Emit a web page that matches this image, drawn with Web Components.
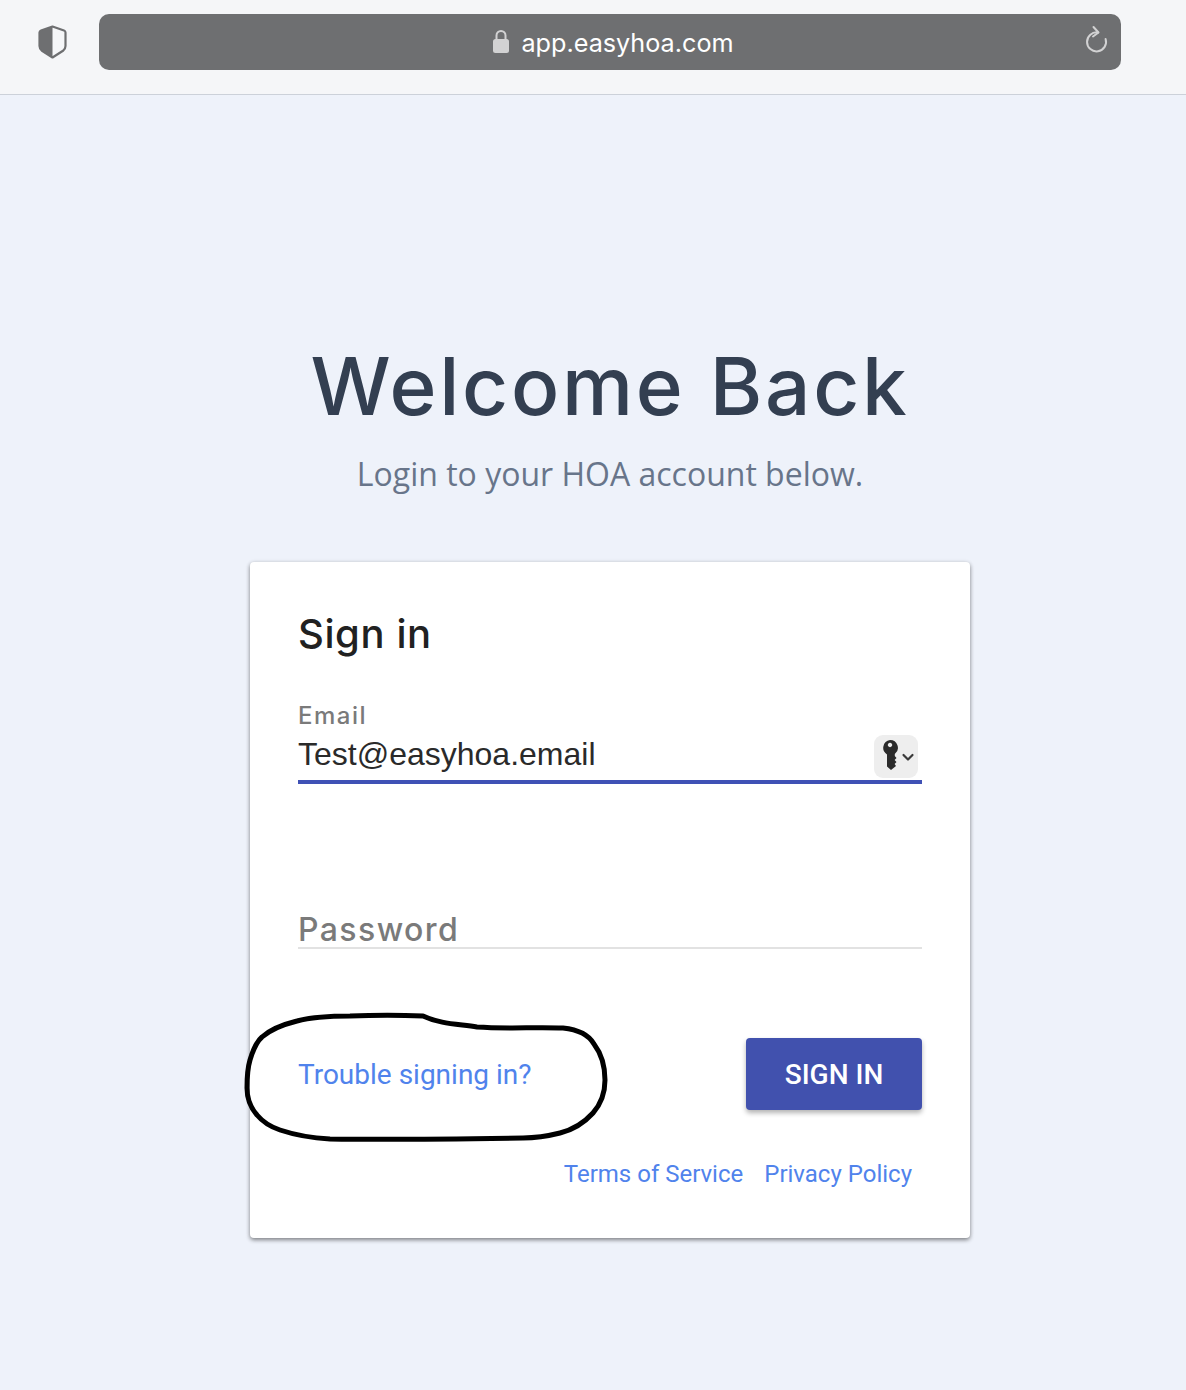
<!DOCTYPE html>
<html lang="en">
<head>
<meta charset="utf-8">
<title>EasyHOA</title>
<style>
	html, body {
		margin: 0;
		height: 1390px;
		overflow: hidden;
		background: #eef2fa;
	}
</style>
</head>
<body>
<browser-bar url="app.easyhoa.com"></browser-bar>
<login-page></login-page>

<script>
class BrowserBar extends HTMLElement {
	constructor() {
		super();
		this.attachShadow({ mode: 'open' });
		this.shadowRoot.innerHTML = `
			<style>
				:host {
					display: flex;
					align-items: center;
					box-sizing: border-box;
					height: 95px;
					padding: 0 65px 11px 38px;
					background: #f5f6f8;
					border-bottom: 1px solid #ccd1d9;
				}
				.shield { width: 29px; height: 34px; margin-right: 32px; flex: none; }
				.field {
					flex: 1;
					display: flex;
					align-items: center;
					justify-content: center;
					position: relative;
					height: 56px;
					border-radius: 10px;
					background: #6e6f71;
					color: #fff;
					font: 400 25.200px Inter, "Liberation Sans", sans-serif;
				}
				.field span { margin-top: 2px; }
				.lock { width: 18px; height: 25px; margin-right: 11px; margin-left: 6px; }
				.reload { position: absolute; right: 12px; top: 11px; width: 26px; height: 30px; }
			</style>
			<svg class="shield" viewBox="0 0 29 34" aria-hidden="true">
				<path d="M14.500 1.500 L26 5.500 Q27.500 6 27.500 7.500 V21 Q27.500 24 25 25.800 L14.500 32.500 L4 25.800 Q1.500 24 1.500 21 V7.500 Q1.500 6 3 5.500 Z" fill="none" stroke="#6e6f71" stroke-width="2.200" stroke-linejoin="round"/>
				<path d="M14.500 1.500 V32.500 L4 25.800 Q1.500 24 1.500 21 V7.500 Q1.500 6 3 5.500 Z" fill="#6e6f71"/>
			</svg>
			<div class="field">
				<svg class="lock" viewBox="0 0 18 25" aria-hidden="true">
					<path d="M4.500 11 V6.500 a4.500 4.500 0 0 1 9 0 V11" fill="none" stroke="#d2d2d3" stroke-width="2"/>
					<rect x="1" y="10" width="16" height="14" rx="2.500" fill="#d2d2d3"/>
				</svg>
				<span></span>
				<svg class="reload" viewBox="0 0 26 30" aria-hidden="true">
					<path d="M15 7.500 A9.500 9.500 0 1 0 22.600 14" fill="none" stroke="#d2d2d3" stroke-width="2" stroke-linecap="round"/>
					<path d="M10.500 2 L15.500 7.500 L10 11.500" fill="none" stroke="#d2d2d3" stroke-width="2" stroke-linecap="round" stroke-linejoin="round"/>
				</svg>
			</div>
		`;
	}

	connectedCallback() {
		this.shadowRoot.querySelector('span').textContent = this.getAttribute('url');
	}
}

class TextField extends HTMLElement {
	constructor() {
		super();
		this.attachShadow({ mode: 'open' });
		this.shadowRoot.innerHTML = `
			<style>
				:host {
					display: block;
					position: relative;
					box-sizing: border-box;
					height: 88px;
					border-bottom: 2px solid #e2e2e2;
				}
				:host([active]) { height: 84px; border-bottom: 4px solid #3f51b5; }
				label {
					display: block;
					color: #7a7a7a;
					font: 500 24px/32px "Inter", "Liberation Sans", sans-serif;
					letter-spacing: 1.500px;
				}
				:host(:not([active])) label {
					padding-top: 52px;
					font-size: 32px;
					line-height: 34px;
					letter-spacing: 1.400px;
				}
				.value {
					color: #2a2a2a;
					font: 400 32px/44px "Liberation Sans", sans-serif;
				}
				::slotted(*) { position: absolute; right: 4px; top: 35px; }
			</style>
			<label></label>
			<div class="value"></div>
			<slot></slot>
		`;
	}

	connectedCallback() {
		this.shadowRoot.querySelector('label').textContent = this.getAttribute('label');
		this.shadowRoot.querySelector('.value').textContent = this.getAttribute('value') || '';
	}
}

class KeyButton extends HTMLElement {
	constructor() {
		super();
		this.attachShadow({ mode: 'open' });
		this.shadowRoot.innerHTML = `
			<style>
				:host {
					display: block;
					width: 44px;
					height: 43px;
					border-radius: 9px;
					background: #eeeeee;
				}
				svg { display: block; }
			</style>
			<svg width="44" height="43" viewBox="0 0 44 43" aria-hidden="true">
				<path fill-rule="evenodd" fill="#2b2b2b" d="M16 5 a7.800 7.800 0 0 1 4.800 14 V21 L22.500 23 L20.600 25 L22.500 27 L20.600 29 L22 31 L17 35 L13 31.500 V19.400 A7.800 7.800 0 0 1 16 5 Z M16 7.800 a2.200 2.200 0 1 0 0.010 0 Z"/>
				<path d="M29.500 20 L34 24.500 L38.500 20" fill="none" stroke="#3a3a3a" stroke-width="2.200" stroke-linecap="round" stroke-linejoin="round"/>
			</svg>
		`;
	}
}

class SignInCard extends HTMLElement {
	constructor() {
		super();
		this.attachShadow({ mode: 'open' });
		this.shadowRoot.innerHTML = `
			<style>
				:host {
					display: block;
					box-sizing: border-box;
					width: 720px;
					height: 676px;
					padding: 40px 48px 0;
					background: #fff;
					border-radius: 4px;
					box-shadow: 0 2px 4px rgba(0, 0, 0, 0.45), 0 0 5px rgba(0, 0, 0, 0.06);
				}
				h2 {
					margin: 0 0 34px;
					color: #212121;
					font: 500 40px/64px Inter, "Liberation Sans", sans-serif;
					letter-spacing: 0.600px;
				}
				.fields { display: grid; gap: 77px; }
				.actions {
					display: flex;
					align-items: center;
					justify-content: space-between;
					margin-top: 89px;
				}
				a {
					color: #5083ec;
					text-decoration: none;
					font-family: Roboto, sans-serif;
				}
				.trouble { font-size: 28px; }
				button {
					width: 176px;
					height: 72px;
					padding: 0;
					border: none;
					border-radius: 4px;
					background: #4151ae;
					color: #fff;
					font: 500 28px Roboto, sans-serif;
					box-shadow: 0 3px 5px rgba(0, 0, 0, 0.3);
				}
				.legal {
					display: flex;
					justify-content: flex-end;
					gap: 21px;
					margin-top: 50px;
					padding-right: 10px;
					font-size: 24px;
				}
			</style>
			<h2>Sign in</h2>
			<div class="fields">
				<text-field label="Email" value="Test@easyhoa.email" active><key-button></key-button></text-field>
				<text-field label="Password"></text-field>
			</div>
			<div class="actions">
				<a class="trouble" href="#">Trouble signing in?</a>
				<button type="button">SIGN IN</button>
			</div>
			<div class="legal">
				<a href="#">Terms of Service</a>
				<a href="#">Privacy Policy</a>
			</div>
		`;
	}
}

class LoginPage extends HTMLElement {
	constructor() {
		super();
		this.attachShadow({ mode: 'open' });
		this.shadowRoot.innerHTML = `
			<style>
				:host {
					display: flex;
					flex-direction: column;
					align-items: center;
					position: relative;
					width: 1220px;
					padding-top: 236px;
				}
				h1 {
					margin: 0;
					color: #333f51;
					font: 500 80px/110px Inter, "Liberation Sans", sans-serif;
					letter-spacing: 2.750px;
				}
				p {
					margin: 11px 0 66px;
					color: #68758a;
					font: 400 32px/44px "Open Sans", sans-serif;
				}
				.ink {
					position: absolute;
					left: 0;
					top: -95px;
					width: 1186px;
					height: 1390px;
					pointer-events: none;
				}
			</style>
			<h1>Welcome Back</h1>
			<p>Login to your HOA account below.</p>
			<sign-in-card></sign-in-card>
			<svg class="ink" viewBox="0 0 1186 1390" aria-hidden="true">
				<path fill="none" stroke="#000" stroke-width="5" stroke-linecap="round" stroke-linejoin="round"
					d="M423 1016 C440 1024 458 1024 477 1027 C505 1029 535 1027 563 1028 C582 1030 590 1037 594 1044 C603 1056 605 1068 605 1080 C605 1094 600 1105 593 1113 C583 1124 572 1130 560 1133 C548 1136 535 1138 523 1138 C460 1139 395 1140 330 1139 C312 1138 295 1135 280 1130 C268 1126 262 1121 257 1115 C250 1107 247 1098 247 1088 C247 1078 247 1070 250 1060 C253 1050 256 1042 262 1037 C272 1028 285 1024 297 1021 C315 1016 335 1016 350 1016 C375 1015 400 1015 423 1016 Z"/>
			</svg>
		`;
	}
}

customElements.define('browser-bar', BrowserBar);
customElements.define('text-field', TextField);
customElements.define('key-button', KeyButton);
customElements.define('sign-in-card', SignInCard);
customElements.define('login-page', LoginPage);
</script>
</body>
</html>
